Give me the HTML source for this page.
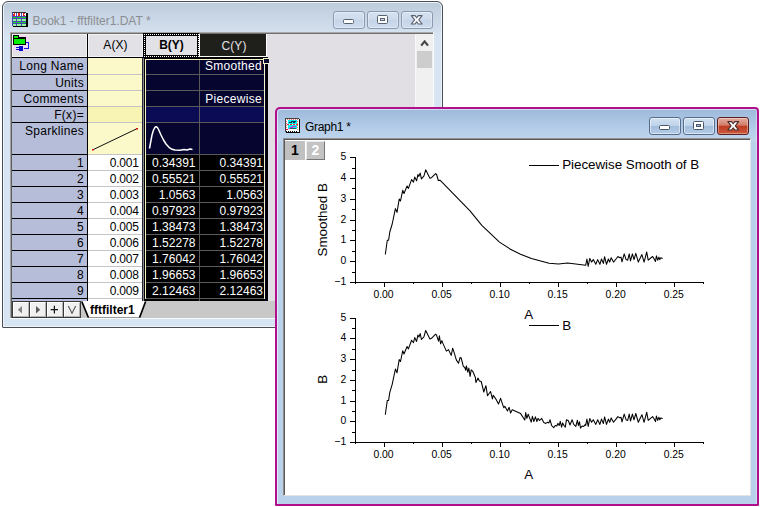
<!DOCTYPE html>
<html><head><meta charset="utf-8"><title>Origin</title>
<style>
html,body{margin:0;padding:0;background:#fff;}
body{width:760px;height:507px;position:relative;overflow:hidden;font-family:"Liberation Sans",sans-serif;font-size:12px;color:#000;}
.abs{position:absolute;}
.win{position:absolute;box-sizing:border-box;}
.cell{position:absolute;box-sizing:border-box;white-space:nowrap;overflow:hidden;font-size:12px;}
.rh{background:#b6bdd8;text-align:right;padding-right:3px;}
.num{text-align:right;padding-right:4px;}
.sel{background:#000;color:#fff;text-align:right;}
.nav{background:#05052f;color:#fff;text-align:right;}
.yel{background:#fbf9c9;}
.hl{position:absolute;height:1px;}
.vl{position:absolute;width:1px;}
.btn{position:absolute;box-sizing:border-box;border-radius:3px;}
svg{position:absolute;left:0;top:0;overflow:visible;}
</style></head><body>

<div class="win" style="left:2px;top:1px;width:441px;height:327px;border:1px solid #4a4f55;border-radius:6px 6px 1px 1px;background:linear-gradient(#bccad9 0px,#c7d4e3 12px,#d1ddeb 26px,#d7e4f2 34px,#d7e4f2 100%);box-shadow:inset 0 0 0 1px #eef3f9;"></div>
<svg width="760" height="507" viewBox="0 0 760 507" shape-rendering="crispEdges">
<g transform="translate(12,12)">
<rect x="1" y="1" width="15" height="14" fill="#000"/>
<rect x="0" y="0" width="14" height="14" fill="#4848b8"/>
<rect x="0" y="0" width="14" height="1" fill="#333"/>
<g fill="#fff"><rect x="1" y="1" width="3" height="3"/><rect x="5" y="1" width="4" height="3"/><rect x="10" y="1" width="4" height="3"/></g>
<g fill="#f02020"><rect x="1" y="2" width="2" height="2"/><rect x="2" y="1" width="1" height="1"/><rect x="6" y="1" width="2" height="3"/><rect x="11" y="1" width="2" height="1"/><rect x="11" y="2" width="1" height="1"/><rect x="11" y="3" width="2" height="1"/></g>
<g fill="#18e018"><rect x="1" y="5" width="3" height="1"/><rect x="5" y="5" width="4" height="1"/><rect x="10" y="5" width="4" height="1"/>
<rect x="1" y="10" width="3" height="1"/><rect x="5" y="10" width="4" height="1"/><rect x="10" y="10" width="4" height="1"/></g>
<g fill="#98f498"><rect x="1" y="7" width="3" height="2"/><rect x="5" y="7" width="4" height="2"/><rect x="10" y="7" width="4" height="2"/>
<rect x="1" y="12" width="3" height="2"/><rect x="5" y="12" width="4" height="2"/><rect x="10" y="12" width="4" height="2"/></g>
</g></svg>
<div class="abs" id="wtitle" style="left:32.5px;top:13px;height:16px;line-height:16px;font-size:12px;color:#8b8d92;letter-spacing:0px;white-space:nowrap;">Book1 - fftfilter1.DAT *</div>
<div class="btn" style="left:333px;top:11px;width:32px;height:18px;border:1px solid #8a9ab3;background:linear-gradient(#d6e2f0,#cddbec 45%,#c4d4e8 52%,#cfddee);box-shadow:inset 0 0 0 1px rgba(255,255,255,.35);"></div>
<div class="btn" style="left:367px;top:11px;width:32px;height:18px;border:1px solid #8a9ab3;background:linear-gradient(#d6e2f0,#cddbec 45%,#c4d4e8 52%,#cfddee);box-shadow:inset 0 0 0 1px rgba(255,255,255,.35);"></div>
<div class="btn" style="left:401px;top:11px;width:32px;height:18px;border:1px solid #8a9ab3;background:linear-gradient(#d6e2f0,#cddbec 45%,#c4d4e8 52%,#cfddee);box-shadow:inset 0 0 0 1px rgba(255,255,255,.35);"></div>
<svg width="760" height="507" viewBox="0 0 760 507">
<rect x="343.5" y="19.5" width="10" height="4" rx="1" fill="#fbfcfe" stroke="#59616e" stroke-width="1"/>
<rect x="377.5" y="15.5" width="10" height="8" rx="1" fill="#fbfcfe" stroke="#59616e" stroke-width="1"/>
<rect x="380.5" y="18.5" width="4" height="2" fill="#cfdcec" stroke="#59616e" stroke-width="1"/>
<path d="M411.3 15.6 L415.1 15.6 L416.7 17.8 L418.3 15.6 L422.1 15.6 L418.8 19.8 L422.1 24 L418.3 24 L416.7 21.8 L415.1 24 L411.3 24 L414.6 19.8 Z" fill="#fbfcfe" stroke="#59616e" stroke-width="1.1" stroke-linejoin="round"/>
</svg>
<div class="abs" style="left:10px;top:32px;width:424px;height:287px;background:#e1dfe4;"></div>
<div class="abs" style="left:10px;top:32px;width:424px;height:1px;background:#a9a9a9;"></div>
<div class="abs" style="left:10px;top:32px;width:1px;height:287px;background:#a3a3a3;"></div>
<div class="abs" style="left:11px;top:33px;width:423px;height:1px;background:#6e6e6e;"></div>
<div class="abs" style="left:11px;top:33px;width:1px;height:285px;background:#5c5c5c;"></div>
<div class="abs" style="left:433px;top:32px;width:1px;height:287px;background:#fafbfd;"></div>
<div class="abs" style="left:10px;top:318px;width:424px;height:1px;background:#fafbfd;"></div>
<div class="abs" style="left:12px;top:34px;width:76px;height:267px;background:#000;"></div>
<div class="abs" style="left:88px;top:34px;width:180px;height:24px;background:#000;"></div>
<div class="abs" style="left:88px;top:58px;width:55px;height:243px;background:#c4c4c4;"></div>
<div class="abs" style="left:142px;top:58px;width:1px;height:243px;background:#26263a;"></div>
<div class="abs" style="left:143px;top:58px;width:1px;height:243px;background:#8a8a8a;"></div>
<div class="abs" style="left:144px;top:57px;width:124px;height:244px;background:#000;"></div>
<div class="abs" style="left:146px;top:60px;width:118px;height:241px;background:#5a5a5a;"></div>
<div class="cell" style="left:12px;top:34px;width:75px;height:23px;background:#e2e1e6;box-shadow:inset -1px -1px 0 #f3f3f5, inset 1px 1px 0 #f3f3f5;"></div>
<div class="cell" style="left:88px;top:34px;width:55px;height:23px;background:#e2e1e6;text-align:center;line-height:23px;letter-spacing:0.1px;box-shadow:inset -1px -1px 0 #f3f3f5, inset 1px 1px 0 #f3f3f5;">A(X)</div>
<div class="cell" style="left:146px;top:36px;width:51px;height:19px;background:#e2e1e6;text-align:center;line-height:19px;font-weight:bold;">B(Y)</div>
<div class="cell" style="left:199px;top:34px;width:68px;height:23px;background:#fff;"></div>
<div class="cell" style="left:200px;top:34px;width:66px;height:22px;background:#1f1f1b;color:#e2e1e6;text-align:center;line-height:22px;letter-spacing:0.1px;padding-left:2px;padding-top:1px;">C(Y)</div>
<div class="cell rh" style="left:12px;top:58px;width:75px;height:16px;line-height:15px;padding-top:1px;letter-spacing:0.3px;">Long Name</div>
<div class="cell" style="left:88px;top:58px;width:54px;height:16px;background:#fbf9c9;"></div>
<div class="cell nav" style="left:146px;top:60px;width:53px;height:14px;background:#05052f;"></div>
<div class="cell nav" style="left:200px;top:60px;width:64px;height:14px;background:#05052f;"><div style="position:absolute;right:2px;top:-1px;line-height:15px;letter-spacing:0.3px;">Smoothed</div></div>
<div class="cell rh" style="left:12px;top:75px;width:75px;height:15px;line-height:15px;padding-top:1px;letter-spacing:0.3px;">Units</div>
<div class="cell" style="left:88px;top:75px;width:54px;height:15px;background:#fbf9c9;"></div>
<div class="cell nav" style="left:146px;top:75px;width:53px;height:15px;background:#05052f;"></div>
<div class="cell nav" style="left:200px;top:75px;width:64px;height:15px;background:#05052f;"><div style="position:absolute;right:2px;top:1px;line-height:15px;letter-spacing:0.3px;"></div></div>
<div class="cell rh" style="left:12px;top:91px;width:75px;height:15px;line-height:15px;padding-top:1px;letter-spacing:0.3px;">Comments</div>
<div class="cell" style="left:88px;top:91px;width:54px;height:15px;background:#fbf9c9;"></div>
<div class="cell nav" style="left:146px;top:91px;width:53px;height:15px;background:#05052f;"></div>
<div class="cell nav" style="left:200px;top:91px;width:64px;height:15px;background:#05052f;"><div style="position:absolute;right:2px;top:1px;line-height:15px;letter-spacing:0.3px;">Piecewise</div></div>
<div class="cell rh" style="left:12px;top:107px;width:75px;height:15px;line-height:15px;padding-top:1px;letter-spacing:0.3px;">F(x)=</div>
<div class="cell" style="left:88px;top:107px;width:54px;height:15px;background:#f8f5b4;"></div>
<div class="cell nav" style="left:146px;top:107px;width:53px;height:15px;background:#0a0a55;"></div>
<div class="cell nav" style="left:200px;top:107px;width:64px;height:15px;background:#0a0a55;"><div style="position:absolute;right:2px;top:1px;line-height:15px;letter-spacing:0.3px;"></div></div>
<div class="cell rh" style="left:12px;top:123px;width:75px;height:31px;line-height:15px;padding-top:1px;letter-spacing:0.3px;">Sparklines</div>
<div class="cell" style="left:88px;top:123px;width:54px;height:31px;background:#fbf9c9;"></div>
<div class="cell nav" style="left:146px;top:123px;width:53px;height:31px;background:#05052f;"></div>
<div class="cell nav" style="left:200px;top:123px;width:64px;height:31px;background:#05052f;"><div style="position:absolute;right:2px;top:1px;line-height:15px;letter-spacing:0.3px;"></div></div>
<div class="cell rh" style="left:12px;top:155px;width:75px;height:15px;line-height:15px;padding-top:1px;letter-spacing:0.3px;">1</div>
<div class="cell num" style="left:88px;top:155px;width:54px;height:15px;line-height:15px;padding-top:1px;padding-right:3.3px;letter-spacing:-0.2px;background:#fff;">0.001</div>
<div class="cell sel" style="left:146px;top:155px;width:53px;height:15px;line-height:15px;padding-top:1px;padding-right:3.5px;">0.34391</div>
<div class="cell sel" style="left:200px;top:155px;width:64px;height:15px;line-height:15px;padding-top:1px;padding-right:1px;">0.34391</div>
<div class="cell rh" style="left:12px;top:171px;width:75px;height:15px;line-height:15px;padding-top:1px;letter-spacing:0.3px;">2</div>
<div class="cell num" style="left:88px;top:171px;width:54px;height:15px;line-height:15px;padding-top:1px;padding-right:3.3px;letter-spacing:-0.2px;background:#fff;">0.002</div>
<div class="cell sel" style="left:146px;top:171px;width:53px;height:15px;line-height:15px;padding-top:1px;padding-right:3.5px;">0.55521</div>
<div class="cell sel" style="left:200px;top:171px;width:64px;height:15px;line-height:15px;padding-top:1px;padding-right:1px;">0.55521</div>
<div class="cell rh" style="left:12px;top:187px;width:75px;height:15px;line-height:15px;padding-top:1px;letter-spacing:0.3px;">3</div>
<div class="cell num" style="left:88px;top:187px;width:54px;height:15px;line-height:15px;padding-top:1px;padding-right:3.3px;letter-spacing:-0.2px;background:#fff;">0.003</div>
<div class="cell sel" style="left:146px;top:187px;width:53px;height:15px;line-height:15px;padding-top:1px;padding-right:3.5px;">1.0563</div>
<div class="cell sel" style="left:200px;top:187px;width:64px;height:15px;line-height:15px;padding-top:1px;padding-right:1px;">1.0563</div>
<div class="cell rh" style="left:12px;top:203px;width:75px;height:15px;line-height:15px;padding-top:1px;letter-spacing:0.3px;">4</div>
<div class="cell num" style="left:88px;top:203px;width:54px;height:15px;line-height:15px;padding-top:1px;padding-right:3.3px;letter-spacing:-0.2px;background:#fff;">0.004</div>
<div class="cell sel" style="left:146px;top:203px;width:53px;height:15px;line-height:15px;padding-top:1px;padding-right:3.5px;">0.97923</div>
<div class="cell sel" style="left:200px;top:203px;width:64px;height:15px;line-height:15px;padding-top:1px;padding-right:1px;">0.97923</div>
<div class="cell rh" style="left:12px;top:219px;width:75px;height:15px;line-height:15px;padding-top:1px;letter-spacing:0.3px;">5</div>
<div class="cell num" style="left:88px;top:219px;width:54px;height:15px;line-height:15px;padding-top:1px;padding-right:3.3px;letter-spacing:-0.2px;background:#fff;">0.005</div>
<div class="cell sel" style="left:146px;top:219px;width:53px;height:15px;line-height:15px;padding-top:1px;padding-right:3.5px;">1.38473</div>
<div class="cell sel" style="left:200px;top:219px;width:64px;height:15px;line-height:15px;padding-top:1px;padding-right:1px;">1.38473</div>
<div class="cell rh" style="left:12px;top:235px;width:75px;height:15px;line-height:15px;padding-top:1px;letter-spacing:0.3px;">6</div>
<div class="cell num" style="left:88px;top:235px;width:54px;height:15px;line-height:15px;padding-top:1px;padding-right:3.3px;letter-spacing:-0.2px;background:#fff;">0.006</div>
<div class="cell sel" style="left:146px;top:235px;width:53px;height:15px;line-height:15px;padding-top:1px;padding-right:3.5px;">1.52278</div>
<div class="cell sel" style="left:200px;top:235px;width:64px;height:15px;line-height:15px;padding-top:1px;padding-right:1px;">1.52278</div>
<div class="cell rh" style="left:12px;top:251px;width:75px;height:15px;line-height:15px;padding-top:1px;letter-spacing:0.3px;">7</div>
<div class="cell num" style="left:88px;top:251px;width:54px;height:15px;line-height:15px;padding-top:1px;padding-right:3.3px;letter-spacing:-0.2px;background:#fff;">0.007</div>
<div class="cell sel" style="left:146px;top:251px;width:53px;height:15px;line-height:15px;padding-top:1px;padding-right:3.5px;">1.76042</div>
<div class="cell sel" style="left:200px;top:251px;width:64px;height:15px;line-height:15px;padding-top:1px;padding-right:1px;">1.76042</div>
<div class="cell rh" style="left:12px;top:267px;width:75px;height:15px;line-height:15px;padding-top:1px;letter-spacing:0.3px;">8</div>
<div class="cell num" style="left:88px;top:267px;width:54px;height:15px;line-height:15px;padding-top:1px;padding-right:3.3px;letter-spacing:-0.2px;background:#fff;">0.008</div>
<div class="cell sel" style="left:146px;top:267px;width:53px;height:15px;line-height:15px;padding-top:1px;padding-right:3.5px;">1.96653</div>
<div class="cell sel" style="left:200px;top:267px;width:64px;height:15px;line-height:15px;padding-top:1px;padding-right:1px;">1.96653</div>
<div class="cell rh" style="left:12px;top:283px;width:75px;height:15px;line-height:15px;padding-top:1px;letter-spacing:0.3px;">9</div>
<div class="cell num" style="left:88px;top:283px;width:54px;height:15px;line-height:15px;padding-top:1px;padding-right:3.3px;letter-spacing:-0.2px;background:#fff;">0.009</div>
<div class="cell sel" style="left:146px;top:283px;width:53px;height:15px;line-height:15px;padding-top:1px;padding-right:3.5px;">2.12463</div>
<div class="cell sel" style="left:200px;top:283px;width:64px;height:15px;line-height:15px;padding-top:1px;padding-right:1px;">2.12463</div>
<div class="cell" style="left:12px;top:299px;width:75px;height:2px;background:#b6bdd8;"></div>
<div class="cell" style="left:88px;top:299px;width:54px;height:2px;background:#fff;"></div>
<div class="cell" style="left:146px;top:299px;width:53px;height:2px;background:#000;"></div>
<div class="cell" style="left:200px;top:299px;width:64px;height:2px;background:#000;"></div>
<div class="abs" style="left:145px;top:59px;width:120px;height:1px;background:#f6f4c6;"></div>
<div class="abs" style="left:145px;top:59px;width:1px;height:240px;background:#f6f4c6;"></div>
<div class="abs" style="left:264px;top:59px;width:1px;height:240px;background:#f6f4c6;"></div>
<div class="abs" style="left:265px;top:60px;width:1px;height:241px;background:#05052f;"></div>
<div class="abs" style="left:263px;top:58px;width:6px;height:6px;background:#f6f4c6;"></div>
<div class="abs" style="left:264px;top:59px;width:5px;height:4px;background:#0a0a30;"></div>
<div class="abs" style="left:143px;top:33px;width:56px;height:25px;box-sizing:border-box;border:3px solid #000;border-right-width:2px;"></div>
<div class="abs" style="left:144px;top:34px;width:55px;height:23px;box-sizing:border-box;border:1px dotted #fff;"></div>
<div class="abs" style="left:267px;top:34px;width:1px;height:23px;background:#e1dfe4;"></div>
<svg width="760" height="507" viewBox="0 0 760 507">
<path d="M93 149.7 L136.7 128.8" stroke="#111" stroke-width="1" fill="none"/>
<rect x="92" y="149" width="2" height="1.5" fill="#e01010"/><rect x="136" y="128" width="2" height="1.5" fill="#e01010"/>
<path d="M149.5 148.5 L150.5 143 L152 135 L153.5 130 L155 127.3 L156.3 126.7 L157.5 127.5 L159 130.5 L161 135 L163.5 140 L166 144 L169 147.3 L172 149.3 L175 150 L180 150.2 L184 149.6 L187 150 L190 149 L192.5 149.4" stroke="#fff" stroke-width="1.5" fill="none" stroke-linejoin="round"/>
<g shape-rendering="crispEdges">
<rect x="13" y="35" width="16" height="16" fill="#f0daf0"/>
<path d="M13.5 35.5 h5 v2 h7 v7 h-12 z" fill="#00f000" stroke="#000" stroke-width="1"/>
<rect x="14" y="38" width="11" height="1" fill="#000"/>
<path d="M26 42.5 h2.5 v6 h-5" fill="none" stroke="#1818e8" stroke-width="1"/>
<rect x="19" y="46" width="4" height="5" fill="#0808d0"/><rect x="16" y="47" width="3" height="1" fill="#0808d0"/><rect x="16" y="49" width="3" height="1" fill="#0808d0"/>
</g>
</svg>
<div class="abs" style="left:415px;top:34px;width:1px;height:267px;background:#f8f8f8;"></div>
<div class="abs" style="left:416px;top:34px;width:17px;height:284px;background:#f0f0f0;"></div>
<div class="abs" style="left:417px;top:51px;width:15px;height:17px;background:#cdcdcd;"></div>
<svg width="760" height="507" viewBox="0 0 760 507"><path d="M421.2 45.6 L424.6 41.4 L428 45.6" stroke="#454545" stroke-width="2.2" fill="none"/></svg>
<div class="abs" style="left:12px;top:301px;width:421px;height:17px;background:#c8c8c8;"></div>
<div class="abs" style="left:12px;top:301px;width:69px;height:17px;background:#3a3a3a;"></div>
<div class="abs" style="left:13px;top:302px;width:16px;height:15px;box-sizing:border-box;background:#f0f0f0;border-top:1px solid #fff;border-left:1px solid #fff;border-right:1px solid #b4b4b4;border-bottom:1px solid #b4b4b4;"></div>
<div class="abs" style="left:30px;top:302px;width:16px;height:15px;box-sizing:border-box;background:#f0f0f0;border-top:1px solid #fff;border-left:1px solid #fff;border-right:1px solid #b4b4b4;border-bottom:1px solid #b4b4b4;"></div>
<div class="abs" style="left:47px;top:302px;width:16px;height:15px;box-sizing:border-box;background:#f0f0f0;border-top:1px solid #fff;border-left:1px solid #fff;border-right:1px solid #b4b4b4;border-bottom:1px solid #b4b4b4;"></div>
<div class="abs" style="left:64px;top:302px;width:16px;height:15px;box-sizing:border-box;background:#f0f0f0;border-top:1px solid #fff;border-left:1px solid #fff;border-right:1px solid #b4b4b4;border-bottom:1px solid #b4b4b4;"></div>
<svg width="760" height="507" viewBox="0 0 760 507">
<path d="M22 306 L22 313.4 L17.8 309.7 Z" fill="#858585"/>
<path d="M36 306 L36 313.4 L40.2 309.7 Z" fill="#5c5c5c"/>
<path d="M50.7 309.6 H58 M54.4 305.8 V313.4" stroke="#111" stroke-width="1.2" fill="none"/>
<path d="M68.3 306 L72 313.2 L75.7 306" stroke="#555" stroke-width="1.1" fill="none"/>
<path d="M82 301 L88.5 318 L139.5 318 L145.5 301 Z" fill="#fff"/>
<path d="M88 317.5 H140" stroke="#9a9a9a" stroke-width="1" fill="none"/>
<path d="M81.8 301.5 L88.4 317.5 M139.6 317.5 L145.6 301.5" fill="none" stroke="#000" stroke-width="1.7"/>
</svg>
<div class="abs" style="left:90px;top:302px;height:17px;line-height:17px;font-size:12px;font-weight:bold;letter-spacing:0px;" id="tabtxt">fftfilter1</div>
<div class="win" style="left:275px;top:107px;width:484px;height:399px;border:2px solid #b0108c;border-radius:5px 4px 1px 1px;background:linear-gradient(#9db9da 0px,#a9c3e2 10px,#b7cfea 22px,#bfd5ed 31px,#b9d1ea 33px);box-shadow:inset 1px 1px 0 rgba(255,255,255,.55), inset -1px 0 0 rgba(255,255,255,.35);"></div>
<div class="abs" style="left:283px;top:138px;width:468px;height:358px;box-sizing:border-box;background:#fff;border-left:1px solid #8e8e8e;border-top:1px solid #8e8e8e;border-right:1px solid #e3e3e3;border-bottom:1px solid #e3e3e3;"></div>
<div class="abs" style="left:284px;top:139px;width:466px;height:1px;background:#5a5a5a;"></div>
<div class="abs" style="left:284px;top:139px;width:1px;height:356px;background:#5a5a5a;"></div>
<svg width="760" height="507" viewBox="0 0 760 507" shape-rendering="crispEdges">
<g transform="translate(285,118)">
<rect x="1" y="1" width="14" height="14" fill="#000"/>
<rect x="0" y="0" width="14" height="14" fill="#fff"/>
<rect x="0" y="0" width="14" height="1" fill="#444"/><rect x="0" y="0" width="1" height="14" fill="#444"/>
<rect x="1.5" y="1.5" width="11" height="11" fill="none" stroke="#f07070" stroke-width="1" stroke-dasharray="1 1"/>
<rect x="1" y="12" width="12" height="1" fill="#fff"/>
<rect x="3" y="2" width="9" height="4" fill="#00f0f0"/>
<rect x="3" y="7" width="9" height="4" fill="#00f0f0"/>
<path d="M2 6.5 H13" stroke="#e03030" stroke-dasharray="2 1" fill="none"/>
<path d="M4 4.5 h2 v-1 h2 v1 h1 v-1 h2" stroke="#103050" fill="none"/>
<path d="M4 10.5 h1 v-1 h2 v-1 h4" stroke="#c030e0" fill="none"/>
<path d="M5 10.5 h6" stroke="#206060" fill="none"/>
<rect x="1" y="11" width="2" height="1" fill="#e00020"/>
<path d="M1 13.5 H13" stroke="#000" stroke-dasharray="1 1" fill="none"/>
</g></svg>
<div class="abs" id="gtitle" style="left:305px;top:119px;height:16px;line-height:16px;font-size:12px;color:#000;letter-spacing:-0.3px;white-space:nowrap;">Graph1 *</div>
<div class="btn" style="left:649px;top:117px;width:32px;height:18px;border:1px solid #566d8b;background:linear-gradient(#d2e1f2,#bfd3ea 47%,#a3bddc 53%,#b4cce7);box-shadow:inset 0 0 0 1px rgba(255,255,255,.5);"></div>
<div class="btn" style="left:683px;top:117px;width:32px;height:18px;border:1px solid #566d8b;background:linear-gradient(#d2e1f2,#bfd3ea 47%,#a3bddc 53%,#b4cce7);box-shadow:inset 0 0 0 1px rgba(255,255,255,.5);"></div>
<div class="btn" style="left:717px;top:117px;width:32px;height:18px;border:1px solid #5a1f1f;background:linear-gradient(#e4ada0,#d17d68 45%,#bf3c22 52%,#cb5a3e);box-shadow:inset 0 0 0 1px rgba(255,255,255,.35);"></div>
<svg width="760" height="507" viewBox="0 0 760 507">
<rect x="659.5" y="125.5" width="10" height="4" rx="1" fill="#fff" stroke="#4a5666" stroke-width="1"/>
<rect x="693.5" y="121.5" width="10" height="8" rx="1" fill="#fff" stroke="#4a5666" stroke-width="1"/>
<rect x="696.5" y="124.5" width="4" height="2" fill="#a3bddc" stroke="#4a5666" stroke-width="1"/>
<path d="M727.8 121.6 L731.6 121.6 L733.2 123.8 L734.8 121.6 L738.6 121.6 L735.3 125.8 L738.6 130 L734.8 130 L733.2 127.8 L731.6 130 L727.8 130 L731.1 125.8 Z" fill="#fff" stroke="#4a2a2a" stroke-width="1.1" stroke-linejoin="round"/>
</svg>
<div class="abs" style="left:285px;top:141px;width:20px;height:19px;background:#c0c0c0;font-weight:bold;font-size:14px;line-height:19px;text-align:center;">1</div>
<div class="abs" style="left:306px;top:141px;width:19px;height:19px;box-sizing:border-box;background:#c3c3c3;border:1px solid #ececec;border-right-color:#777;border-bottom-color:#777;color:#fff;font-weight:bold;font-size:14px;line-height:17px;text-align:center;">2</div>
<svg width="760" height="507" viewBox="0 0 760 507">
<g fill="#000" shape-rendering="crispEdges">
<rect x="355" y="157" width="1" height="126"/>
<rect x="350" y="282" width="354" height="1"/>
<rect x="350" y="157" width="5" height="1"/>
<rect x="352" y="168" width="3" height="1"/>
<rect x="350" y="178" width="5" height="1"/>
<rect x="352" y="188" width="3" height="1"/>
<rect x="350" y="199" width="5" height="1"/>
<rect x="352" y="209" width="3" height="1"/>
<rect x="350" y="220" width="5" height="1"/>
<rect x="352" y="230" width="3" height="1"/>
<rect x="350" y="240" width="5" height="1"/>
<rect x="352" y="251" width="3" height="1"/>
<rect x="350" y="261" width="5" height="1"/>
<rect x="352" y="272" width="3" height="1"/>
<rect x="350" y="282" width="5" height="1"/>
<rect x="355" y="283" width="1" height="1"/>
<rect x="384" y="283" width="1" height="4"/>
<rect x="413" y="283" width="1" height="1"/>
<rect x="442" y="283" width="1" height="4"/>
<rect x="471" y="283" width="1" height="1"/>
<rect x="500" y="283" width="1" height="4"/>
<rect x="529" y="283" width="1" height="1"/>
<rect x="558" y="283" width="1" height="4"/>
<rect x="587" y="283" width="1" height="1"/>
<rect x="616" y="283" width="1" height="4"/>
<rect x="645" y="283" width="1" height="1"/>
<rect x="674" y="283" width="1" height="4"/>
<rect x="703" y="283" width="1" height="1"/>
<rect x="529" y="165" width="30" height="1"/>
</g>
<g font-family="Liberation Sans, sans-serif" font-size="10.4px" fill="#000">
<text x="346.2" y="159.7" text-anchor="end">5</text>
<text x="346.2" y="180.7" text-anchor="end">4</text>
<text x="346.2" y="201.7" text-anchor="end">3</text>
<text x="346.2" y="222.7" text-anchor="end">2</text>
<text x="346.2" y="242.7" text-anchor="end">1</text>
<text x="346.2" y="263.7" text-anchor="end">0</text>
<text x="346.2" y="284.7" text-anchor="end">−1</text>
<text x="383.5" y="297.6" text-anchor="middle">0.00</text>
<text x="441.6" y="297.6" text-anchor="middle">0.05</text>
<text x="499.6" y="297.6" text-anchor="middle">0.10</text>
<text x="557.7" y="297.6" text-anchor="middle">0.15</text>
<text x="615.7" y="297.6" text-anchor="middle">0.20</text>
<text x="673.8" y="297.6" text-anchor="middle">0.25</text>
</g>
<g font-family="Liberation Sans, sans-serif" font-size="13.4px" fill="#000">
<text x="528.6" y="318.8" text-anchor="middle">A</text>
<text transform="translate(327.3,219.8) rotate(-90)" text-anchor="middle" letter-spacing="-0.05">Smoothed B</text>
<text x="562.2" y="168.6" letter-spacing="-0.04">Piecewise Smooth of B</text>
</g>
<path d="M385.3 254.5 L387.3 240.2 L388.6 240.2 L389.8 232.0 L392.2 224.0 L395.4 208.6 L397.0 212.4 L399.2 199.1 L400.5 201.0 L402.7 190.3 L404.0 193.5 L407.1 185.9 L408.4 188.4 L411.6 179.6 L413.5 182.1 L414.7 177.0 L416.6 180.8 L417.9 174.5 L418.9 176.4 L420.2 173.0 L421.4 178.9 L423.9 176.2 L425.7 169.8 L429.9 178.3 L431.5 177.7 L435.6 173.6 L436.6 174.5 L438.3 180.5 L440.0 180.2 L470.0 210.9 L481.8 225.3 L499.5 242.1 L510.4 249.2 L520.5 254.2 L531.4 258.4 L549.1 263.3 L558.4 264.0 L567.6 263.1 L585.7 265.2 L585.7 265.3 L586.9 259.0 L588.2 266.3 L589.8 258.4 L591.6 262.1 L593.3 259.6 L595.8 264.3 L597.7 259.6 L599.9 264.3 L601.5 259.0 L603.4 263.4 L604.6 256.7 L606.5 264.3 L608.4 259.0 L609.7 262.1 L611.2 257.7 L613.5 262.1 L616.0 259.0 L617.9 256.5 L619.8 257.7 L621.0 257.1 L622.0 261.8 L624.2 253.9 L626.1 259.6 L627.7 260.2 L629.2 253.9 L630.5 260.9 L632.4 253.9 L634.0 259.6 L635.8 253.3 L638.3 262.1 L641.9 254.6 L644.1 262.1 L646.7 252.0 L648.2 260.2 L652.6 256.5 L653.9 258.4 L655.5 261.5 L656.4 255.8 L657.7 260.2 L658.9 257.1 L659.8 259.6 L660.8 257.7 L662.7 258.4" stroke="#000" stroke-width="1.05" fill="none" stroke-linejoin="round"/>
<g fill="#000" shape-rendering="crispEdges">
<rect x="355" y="318" width="1" height="125"/>
<rect x="350" y="442" width="354" height="1"/>
<rect x="350" y="318" width="5" height="1"/>
<rect x="352" y="328" width="3" height="1"/>
<rect x="350" y="338" width="5" height="1"/>
<rect x="352" y="349" width="3" height="1"/>
<rect x="350" y="359" width="5" height="1"/>
<rect x="352" y="370" width="3" height="1"/>
<rect x="350" y="380" width="5" height="1"/>
<rect x="352" y="390" width="3" height="1"/>
<rect x="350" y="401" width="5" height="1"/>
<rect x="352" y="411" width="3" height="1"/>
<rect x="350" y="421" width="5" height="1"/>
<rect x="352" y="432" width="3" height="1"/>
<rect x="350" y="442" width="5" height="1"/>
<rect x="355" y="443" width="1" height="1"/>
<rect x="384" y="443" width="1" height="4"/>
<rect x="413" y="443" width="1" height="1"/>
<rect x="442" y="443" width="1" height="4"/>
<rect x="471" y="443" width="1" height="1"/>
<rect x="500" y="443" width="1" height="4"/>
<rect x="529" y="443" width="1" height="1"/>
<rect x="558" y="443" width="1" height="4"/>
<rect x="587" y="443" width="1" height="1"/>
<rect x="616" y="443" width="1" height="4"/>
<rect x="645" y="443" width="1" height="1"/>
<rect x="674" y="443" width="1" height="4"/>
<rect x="703" y="443" width="1" height="1"/>
<rect x="529" y="325" width="30" height="1"/>
</g>
<g font-family="Liberation Sans, sans-serif" font-size="10.4px" fill="#000">
<text x="346.2" y="320.7" text-anchor="end">5</text>
<text x="346.2" y="340.7" text-anchor="end">4</text>
<text x="346.2" y="361.7" text-anchor="end">3</text>
<text x="346.2" y="382.7" text-anchor="end">2</text>
<text x="346.2" y="403.7" text-anchor="end">1</text>
<text x="346.2" y="423.7" text-anchor="end">0</text>
<text x="346.2" y="444.7" text-anchor="end">−1</text>
<text x="383.5" y="457.6" text-anchor="middle">0.00</text>
<text x="441.6" y="457.6" text-anchor="middle">0.05</text>
<text x="499.6" y="457.6" text-anchor="middle">0.10</text>
<text x="557.7" y="457.6" text-anchor="middle">0.15</text>
<text x="615.7" y="457.6" text-anchor="middle">0.20</text>
<text x="673.8" y="457.6" text-anchor="middle">0.25</text>
</g>
<g font-family="Liberation Sans, sans-serif" font-size="13.4px" fill="#000">
<text x="528.6" y="478.8" text-anchor="middle">A</text>
<text transform="translate(327.3,379.2) rotate(-90)" text-anchor="middle" letter-spacing="-0.05">B</text>
<text x="562.2" y="329.6" letter-spacing="-0.04">B</text>
</g>
<path d="M385.3 414.7 L387.3 400.4 L388.6 400.4 L389.8 392.3 L392.2 384.3 L395.4 369.0 L397.0 372.8 L399.2 359.6 L400.5 361.5 L402.7 350.8 L404.0 354.0 L407.1 346.5 L408.4 348.9 L411.6 340.2 L413.5 342.7 L414.7 337.6 L416.6 341.4 L417.9 335.1 L418.9 337.0 L420.2 333.6 L421.4 339.5 L423.9 336.8 L425.7 330.5 L429.9 338.9 L431.5 338.3 L435.6 334.2 L436.6 335.1 L436.6 335.3 L438.5 341.1 L439.4 335.8 L440.6 343.8 L441.9 340.6 L442.7 342.9 L446.4 351.1 L448.5 349.6 L451.2 355.4 L452.7 348.2 L454.3 353.2 L456.4 360.1 L458.5 363.3 L460.1 357.5 L461.2 358.0 L463.3 366.4 L464.8 367.5 L465.7 370.3 L466.4 365.9 L467.8 372.2 L468.8 368.0 L470.1 376.4 L471.2 369.9 L472.7 371.2 L475.4 377.5 L475.9 382.5 L478.0 378.1 L479.4 380.9 L481.2 381.5 L483.8 392.0 L485.9 385.7 L487.5 395.7 L490.6 391.5 L492.4 398.9 L493.3 395.2 L496.4 399.9 L498.5 404.1 L500.6 398.3 L503.8 407.8 L504.8 406.2 L507.5 411.0 L509.1 407.3 L510.6 413.1 L512.2 409.7 L520.6 413.6 L524.8 420.0 L525.7 412.6 L526.9 418.4 L528.2 414.2 L531.2 422.1 L532.4 416.3 L533.8 421.5 L535.4 416.8 L536.9 421.5 L538.0 418.4 L539.6 420.5 L541.7 418.4 L543.8 422.6 L545.8 423.4 L547.6 422.3 L548.9 422.9 L550.0 419.7 L551.6 425.5 L553.7 427.6 L555.3 425.5 L556.8 426.0 L557.9 423.4 L559.2 425.5 L560.2 421.3 L561.6 427.1 L562.6 422.9 L564.0 425.5 L565.3 427.1 L566.5 419.7 L568.4 420.7 L570.0 425.0 L572.1 419.7 L573.7 424.4 L575.8 426.5 L577.4 420.2 L578.4 425.5 L579.5 421.8 L580.5 428.1 L582.1 426.0 L583.7 426.5 L585.3 424.4 L585.7 425.4 L586.9 419.1 L588.2 426.4 L589.8 418.5 L591.6 422.3 L593.3 419.8 L595.8 424.4 L597.7 419.8 L599.9 424.4 L601.5 419.1 L603.4 423.5 L604.6 416.9 L606.5 424.4 L608.4 419.1 L609.7 422.3 L611.2 417.9 L613.5 422.3 L616.0 419.1 L617.9 416.6 L619.8 417.9 L621.0 417.2 L622.0 421.9 L624.2 414.1 L626.1 419.8 L627.7 420.4 L629.2 414.1 L630.5 421.0 L632.4 414.1 L634.0 419.8 L635.8 413.5 L638.3 422.3 L641.9 414.7 L644.1 422.3 L646.7 412.2 L648.2 420.4 L652.6 416.6 L653.9 418.5 L655.5 421.6 L656.4 416.0 L657.7 420.4 L658.9 417.2 L659.8 419.8 L660.8 417.9 L662.7 418.5" stroke="#000" stroke-width="1.05" fill="none" stroke-linejoin="round"/>
</svg>
</body></html>
